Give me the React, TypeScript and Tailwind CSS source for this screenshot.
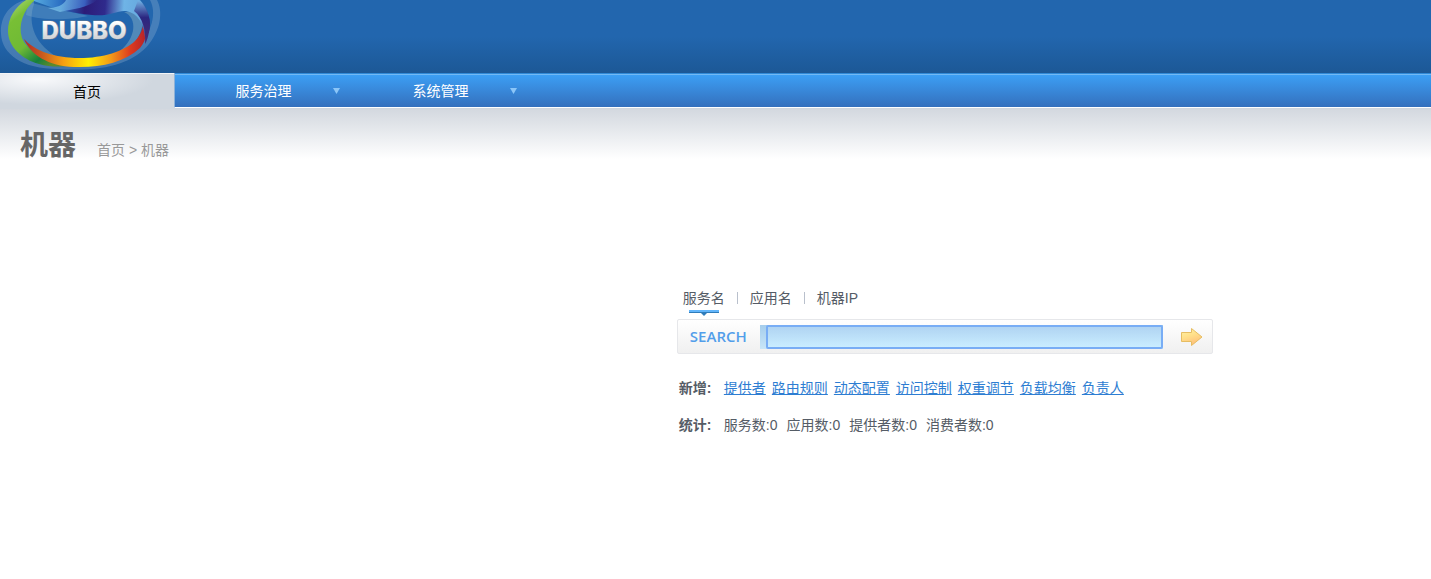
import { useState } from 'react'

const menus = ['服务治理', '系统管理']

const searchTabs = ['服务名', '应用名', '机器IP']

const addLinks = ['提供者', '路由规则', '动态配置', '访问控制', '权重调节', '负载均衡', '负责人']

const stats = [
  { label: '服务数', value: 0 },
  { label: '应用数', value: 0 },
  { label: '提供者数', value: 0 },
  { label: '消费者数', value: 0 },
]

function Logo() {
  return (
    <svg width="165" height="73" viewBox="0 0 165 73" role="img" aria-label="DUBBO">
      <defs>
        <linearGradient id="green" x1="0" y1="0" x2="0.7" y2="1">
          <stop offset="0" stopColor="#b4dc86" />
          <stop offset="0.25" stopColor="#78bf35" />
          <stop offset="0.6" stopColor="#6fba35" />
          <stop offset="0.85" stopColor="#16803c" />
          <stop offset="1" stopColor="#5c8a2c" />
        </linearGradient>
        <linearGradient id="fire" x1="24" y1="0" x2="148" y2="0" gradientUnits="userSpaceOnUse">
          <stop offset="0" stopColor="#b52a26" />
          <stop offset="0.14" stopColor="#c8581f" />
          <stop offset="0.32" stopColor="#f6a011" />
          <stop offset="0.52" stopColor="#fff000" />
          <stop offset="0.7" stopColor="#f49a18" />
          <stop offset="0.86" stopColor="#dd3a1e" />
          <stop offset="1" stopColor="#b01f2c" />
        </linearGradient>
        <linearGradient id="violet" x1="32" y1="0" x2="150" y2="8" gradientUnits="userSpaceOnUse">
          <stop offset="0" stopColor="#5bb0e2" />
          <stop offset="0.25" stopColor="#2a6ec2" />
          <stop offset="0.45" stopColor="#2b1c78" />
          <stop offset="0.62" stopColor="#2f2a8c" />
          <stop offset="0.78" stopColor="#6fb4e6" />
          <stop offset="0.92" stopColor="#67a9df" />
          <stop offset="1" stopColor="#2a2a80" />
        </linearGradient>
        <linearGradient id="edge" x1="0" y1="0" x2="0" y2="1">
          <stop offset="0" stopColor="#74b4e6" />
          <stop offset="0.4" stopColor="#2b2680" />
          <stop offset="1" stopColor="#4a2f74" />
        </linearGradient>
        <linearGradient id="gloss" x1="62" y1="0" x2="100" y2="6" gradientUnits="userSpaceOnUse">
          <stop offset="0" stopColor="#7cc4ea" stopOpacity="0.7" />
          <stop offset="0.6" stopColor="#3c6fd0" stopOpacity="0.8" />
          <stop offset="1" stopColor="#2b1c78" stopOpacity="0" />
        </linearGradient>
        <linearGradient id="silver" x1="0" y1="0" x2="0" y2="1">
          <stop offset="0.2" stopColor="#ffffff" />
          <stop offset="1" stopColor="#bfc3c8" />
        </linearGradient>
      </defs>
      <path d="M25 0C8 5 0 18 1 34C2 54 22 69 58 69C103 72 133 64 149 44C161 29 163 11 157 0H150C157 13 152 33 137 47C117 65 68 70 40 59C8 52 2 23 25 0Z" fill="#9bb9d6" opacity="0.3" />
      <path d="M28 2C49 8 69 11 88 16C71 20 43 21 26 15Z" fill="#85b2d6" opacity="0.3" />
      <path d="M34 4C27 24 35 46 61 59C38 56 22 47 20 34C18 22 23 10 34 0Z" fill="#7fa9c8" opacity="0.4" />
      <path d="M124 12C138 18 136 38 120 51C132 48 141 38 143 22L138 11Z" fill="#7fabc3" opacity="0.5" />
      <path d="M26 0C15 7 8 18 8 31C8 46 21 59 39 64C49 67 59 67 66 66C43 60 27 50 22 38C18 25 23 10 35 0Z" fill="url(#green)" />
      <path d="M24 39C33 49 50 57 75 58C100 59 123 52 135 41C141 35 143 28 144 20C148 29 147 40 140 48C124 63 99 68 74 67C48 66 31 55 24 39Z" fill="url(#fire)" />
      <path d="M34 0H140C148 8 151 20 149 32L145 38C144 24 138 13 126 11C117 10 109 17 92 15C73 13 57 10 34 1Z" fill="url(#violet)" />
      <path d="M138 0C149 9 152 22 149 32C148 37 147 41 145 44C146 30 143 18 134 11Z" fill="url(#edge)" />
      <path d="M60 12C72 9 88 8 97 0H66C64 5 56 8 48 8Z" fill="url(#gloss)" />
      <text
        x="84"
        y="39"
        textAnchor="middle"
        fill="url(#silver)"
        stroke="#6f8193"
        strokeWidth="1"
        paintOrder="stroke"
        className="font-['Inter',sans-serif] text-[24px] font-extrabold"
      >
        DUBBO
      </text>
    </svg>
  )
}

function SearchBox() {
  const [active, setActive] = useState('服务名')
  const [keyword, setKeyword] = useState('')

  return (
    <form onSubmit={(e) => e.preventDefault()}>
      <div className="flex h-[31px] items-start pl-[5px]">
        {searchTabs.map((tab, i) => (
          <div key={tab} className="flex items-start">
            {i > 0 && <span className="mx-[11px] mt-1 h-3 w-px bg-[#b9c0cc]" />}
            <button
              type="button"
              onClick={() => setActive(tab)}
              className="flex flex-col items-center gap-[2px] px-px leading-5"
            >
              {tab}
              {active === tab && (
                <svg width="30" height="6" viewBox="0 0 30 6" aria-hidden="true">
                  <path d="M0 0H30V2H0Z" fill="#62b5fa" />
                  <path d="M0 2H30V3H0Z" fill="#2f7cba" />
                  <path d="M12 3H18L15 6Z" fill="#2f7cba" />
                </svg>
              )}
            </button>
          </div>
        ))}
      </div>
      <div className="flex h-[35px] items-center rounded-xs border border-[#e6e7ea] bg-linear-to-b from-white to-[#f0f0f0]">
        <label
          htmlFor="keyword"
          className="w-[82px] pl-3 font-['Open_Sans',sans-serif] text-[15px] font-semibold text-[#529eea]"
        >
          SEARCH
        </label>
        <div className="flex h-6 min-w-0 flex-1 bg-linear-to-b from-[#a5cdec] to-[#c8e6f8] pl-[6px]">
          <input
            id="keyword"
            type="text"
            value={keyword}
            onChange={(e) => setKeyword(e.target.value)}
            className="min-w-0 flex-1 rounded-xs border-2 border-[#78adf5] bg-linear-to-b from-[#b0d4f2] to-[#c9edff] px-1 outline-none"
          />
        </div>
        <button type="submit" aria-label="搜索" className="mr-[9px] ml-[18px]">
          <svg width="22" height="20" viewBox="0 0 22 20">
            <defs>
              <linearGradient id="arrow" x1="0" y1="0" x2="0.4" y2="1">
                <stop offset="0" stopColor="#fff3a6" />
                <stop offset="0.5" stopColor="#ffe08a" />
                <stop offset="1" stopColor="#ffc07a" />
              </linearGradient>
            </defs>
            <path
              d="M0.5 5.5H10.5V1.5L21 10L10.5 18.5V14.5H0.5Z"
              fill="url(#arrow)"
              stroke="#e6bd62"
              strokeLinejoin="round"
            />
          </svg>
        </button>
      </div>
    </form>
  )
}

export default function App() {
  return (
    <div className="min-h-screen bg-white font-['Liberation_Sans','Noto_Sans_CJK_SC',sans-serif] text-sm text-[#555c66]">
      <header>
        <div className="h-[73px] bg-linear-to-b from-[#2266ae] from-50% to-[#1c5896]">
          <a href="#" className="inline-block">
            <Logo />
          </a>
        </div>
        <nav className="flex h-[36px] bg-[#d0d6de]">
          <a
            href="#"
            className="flex w-[174px] items-center justify-center border-t border-[#f2f4f6] bg-radial-[at_22%_15%] from-[#f8f9fb] to-[#d0d7df] to-60% text-black"
          >
            首页
          </a>
          <div className="flex h-[35px] flex-1 border-b border-l border-b-white border-l-[#8eb2d8] bg-linear-to-b from-[#3ca2f8] to-[#3470bd] shadow-[inset_0_1px_#318ad7,inset_0_2px_#72b9f5]">
            {menus.map((menu) => (
              <button
                key={menu}
                type="button"
                className="grid w-[177px] grid-cols-[32px_1fr_32px] items-center justify-items-center pt-[2px] text-white"
              >
                <span />
                {menu}
                <svg width="7" height="6" viewBox="0 0 7 6" aria-hidden="true">
                  <path d="M0 0H7L3.5 6Z" fill="#8cc6f8" />
                </svg>
              </button>
            ))}
          </div>
        </nav>
      </header>

      <div className="flex h-[50px] items-baseline gap-[21px] bg-linear-to-b from-[#d3d8df] to-white pt-[17px] pl-5">
        <h1 className="text-[28px] leading-10 font-bold text-[#666]">机器</h1>
        <p className="text-[#999]">
          <a href="#">首页</a> &gt; 机器
        </p>
      </div>

      <main className="pt-[129px] pl-[47.3%]">
        <div className="w-[536px] max-w-full">
          <SearchBox />
          <div className="mt-6 flex h-5 items-center pl-[2px] leading-5">
            <strong className="w-[45px]">新增:</strong>
            <div className="flex gap-[6px]">
              {addLinks.map((link) => (
                <a key={link} href="#" className="text-[#2d7dd2] underline underline-offset-1">
                  {link}
                </a>
              ))}
            </div>
          </div>
          <div className="mt-[17px] flex h-5 items-center pl-[2px] leading-5">
            <strong className="w-[45px]">统计:</strong>
            <div className="flex gap-[9px]">
              {stats.map(({ label, value }) => (
                <span key={label}>
                  {label}:{value}
                </span>
              ))}
            </div>
          </div>
        </div>
      </main>
    </div>
  )
}
